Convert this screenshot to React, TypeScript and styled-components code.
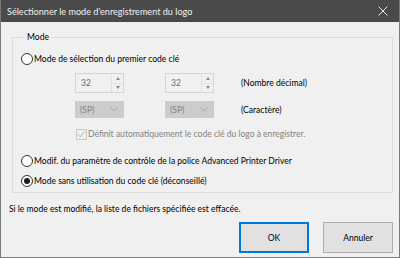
import React from "react";
import styled, { createGlobalStyle } from "styled-components";

const GlobalStyle = createGlobalStyle`
  html, body { margin: 0; padding: 0; background: #f0f0f0; }
  body {
    font-family: Lato, "Noto Sans", "Segoe UI", sans-serif;
    font-size: 8.55px;
    color: #000;
  }
  * { box-sizing: border-box; }
`;

const Window = styled.div`
  width: 400px;
  height: 258px;
  display: flex;
  flex-direction: column;
  background: #f0f0f0;
  border: 1px solid #7a7a7a;
  border-top: none;
  overflow: hidden;
`;

const TitleBar = styled.div`
  height: 22px;
  margin: 0 -1px;
  background: #4a4a4a;
  color: #f2f2f2;
  display: flex;
  align-items: center;
  justify-content: space-between;
  padding: 0 7px 0 7px;
  font-size: 9.1px;
`;

const CloseButton = styled.div`
  width: 14px;
  height: 14px;
  display: flex;
  align-items: center;
  justify-content: center;
  margin-right: 3px;
`;

const Body = styled.div`
  flex: 1;
  display: flex;
  flex-direction: column;
  padding: 8px 6px 0 11px;
`;

const Group = styled.fieldset`
  margin: 0;
  padding: 0 0 3px 8px;
  border: 1px solid #dcdcdc;
  min-width: 0;
`;

const Legend = styled.legend`
  padding: 0 2px;
  margin-left: 4px;
  line-height: 14px;
`;

const RadioRow = styled.label<{ $mt: number }>`
  display: flex;
  align-items: center;
  height: 16px;
  margin-top: ${(p) => p.$mt}px;
  gap: 1px;
  white-space: nowrap;
`;

const RadioCircle = styled.span<{ $checked?: boolean }>`
  width: 12px;
  height: 12px;
  border-radius: 50%;
  border: 1px solid #333;
  background: #fff;
  display: flex;
  align-items: center;
  justify-content: center;
  &::after {
    content: "";
    width: 6px;
    height: 6px;
    border-radius: 50%;
    background: ${(p) => (p.$checked ? "#1a1a1a" : "transparent")};
  }
`;

const FieldRow = styled.div<{ $mt: number; $h: number }>`
  display: flex;
  align-items: center;
  margin-top: ${(p) => p.$mt}px;
  margin-left: 54px;
  height: ${(p) => p.$h}px;
`;

const Spin = styled.div<{ $ml?: number }>`
  width: 49px;
  height: 100%;
  margin-left: ${(p) => p.$ml ?? 0}px;
  border: 1px solid #d5d5d5;
  background: #f0f0f0;
  display: flex;
  color: #6d6d6d;
`;

const SpinValue = styled.span`
  flex: 1;
  padding-left: 5px;
  display: flex;
  align-items: center;
`;

const SpinButtons = styled.div`
  width: 12px;
  display: flex;
  flex-direction: column;
  border-left: 1px solid #e2e2e2;
`;

const SpinArrow = styled.div<{ $down?: boolean }>`
  flex: 1;
  display: flex;
  align-items: center;
  justify-content: center;
  border-top: ${(p) => (p.$down ? "1px solid #e2e2e2" : "none")};
  &::after {
    content: "";
    border-left: 2.5px solid transparent;
    border-right: 2.5px solid transparent;
    ${(p) =>
      p.$down
        ? "border-top: 3px solid #8a8a8a;"
        : "border-bottom: 3px solid #8a8a8a;"}
  }
`;

const Combo = styled.div<{ $ml?: number }>`
  width: 49px;
  height: 100%;
  margin-left: ${(p) => p.$ml ?? 0}px;
  background: #cccccc;
  border: 1px solid #cccccc;
  color: #838383;
  display: flex;
  align-items: center;
  justify-content: space-between;
  padding: 0 5px 0 4px;
`;

const Caption = styled.span<{ $ml: number }>`
  margin-left: ${(p) => p.$ml}px;
  white-space: nowrap;
`;

const CheckRow = styled.div`
  display: flex;
  align-items: center;
  margin-top: 9px;
  margin-left: 55px;
  height: 14px;
  color: #838383;
  white-space: nowrap;
  gap: 1px;
`;

const CheckBox = styled.span`
  width: 11px;
  height: 11px;
  border: 1px solid #c8c8c8;
  background: #f0f0f0;
  display: flex;
  align-items: center;
  justify-content: center;
`;

const Note = styled.div`
  margin-top: 9px;
  margin-left: -3px;
  line-height: 14px;
  white-space: nowrap;
`;

const Buttons = styled.div`
  display: flex;
  justify-content: flex-end;
  gap: 14px;
  margin-top: 6px;
`;

const Button = styled.div<{ $primary?: boolean }>`
  width: 70px;
  height: 31px;
  display: flex;
  align-items: center;
  justify-content: center;
  background: #e1e1e1;
  border: ${(p) => (p.$primary ? "2px solid #0078d7" : "1px solid #adadad")};
`;

const Chevron = () => (
  <svg width="8" height="5" viewBox="0 0 8 5">
    <path d="M0.5 0.5 L4 4 L7.5 0.5" fill="none" stroke="#a8a8a8" strokeWidth="1" />
  </svg>
);

export default function App() {
  return (
    <>
      <GlobalStyle />
      <Window>
        <TitleBar>
          <span>Sélectionner le mode d'enregistrement du logo</span>
          <CloseButton>
            <svg width="10" height="10" viewBox="0 0 10 10">
              <path d="M0.5 0.5 L9.5 9.5 M9.5 0.5 L0.5 9.5" stroke="#e8e8e8" strokeWidth="1" />
            </svg>
          </CloseButton>
        </TitleBar>
        <Body>
          <Group>
            <Legend>Mode</Legend>
            <RadioRow $mt={7}>
              <RadioCircle />
              Mode de sélection du premier code clé
            </RadioRow>
            <FieldRow $mt={6} $h={20}>
              <Spin>
                <SpinValue>32</SpinValue>
                <SpinButtons>
                  <SpinArrow />
                  <SpinArrow $down />
                </SpinButtons>
              </Spin>
              <Spin $ml={41}>
                <SpinValue>32</SpinValue>
                <SpinButtons>
                  <SpinArrow />
                  <SpinArrow $down />
                </SpinButtons>
              </Spin>
              <Caption $ml={27}>(Nombre décimal)</Caption>
            </FieldRow>
            <FieldRow $mt={8} $h={17}>
              <Combo>
                (SP)
                <Chevron />
              </Combo>
              <Combo $ml={41}>
                (SP)
                <Chevron />
              </Combo>
              <Caption $ml={27}>(Caractère)</Caption>
            </FieldRow>
            <CheckRow>
              <CheckBox>
                <svg width="9" height="8" viewBox="0 0 9 8">
                  <path d="M0.5 4 L3.2 6.8 L8.5 0.8" fill="none" stroke="#b0b0b0" strokeWidth="1" />
                </svg>
              </CheckBox>
              Définit automatiquement le code clé du logo à enregistrer.
            </CheckRow>
            <RadioRow $mt={12}>
              <RadioCircle />
              Modif. du paramètre de contrôle de la police Advanced Printer Driver
            </RadioRow>
            <RadioRow $mt={4}>
              <RadioCircle $checked />
              Mode sans utilisation du code clé (déconseillé)
            </RadioRow>
          </Group>
          <Note>Si le mode est modifié, la liste de fichiers spécifiée est effacée.</Note>
          <Buttons>
            <Button $primary>OK</Button>
            <Button>Annuler</Button>
          </Buttons>
        </Body>
      </Window>
    </>
  );
}
